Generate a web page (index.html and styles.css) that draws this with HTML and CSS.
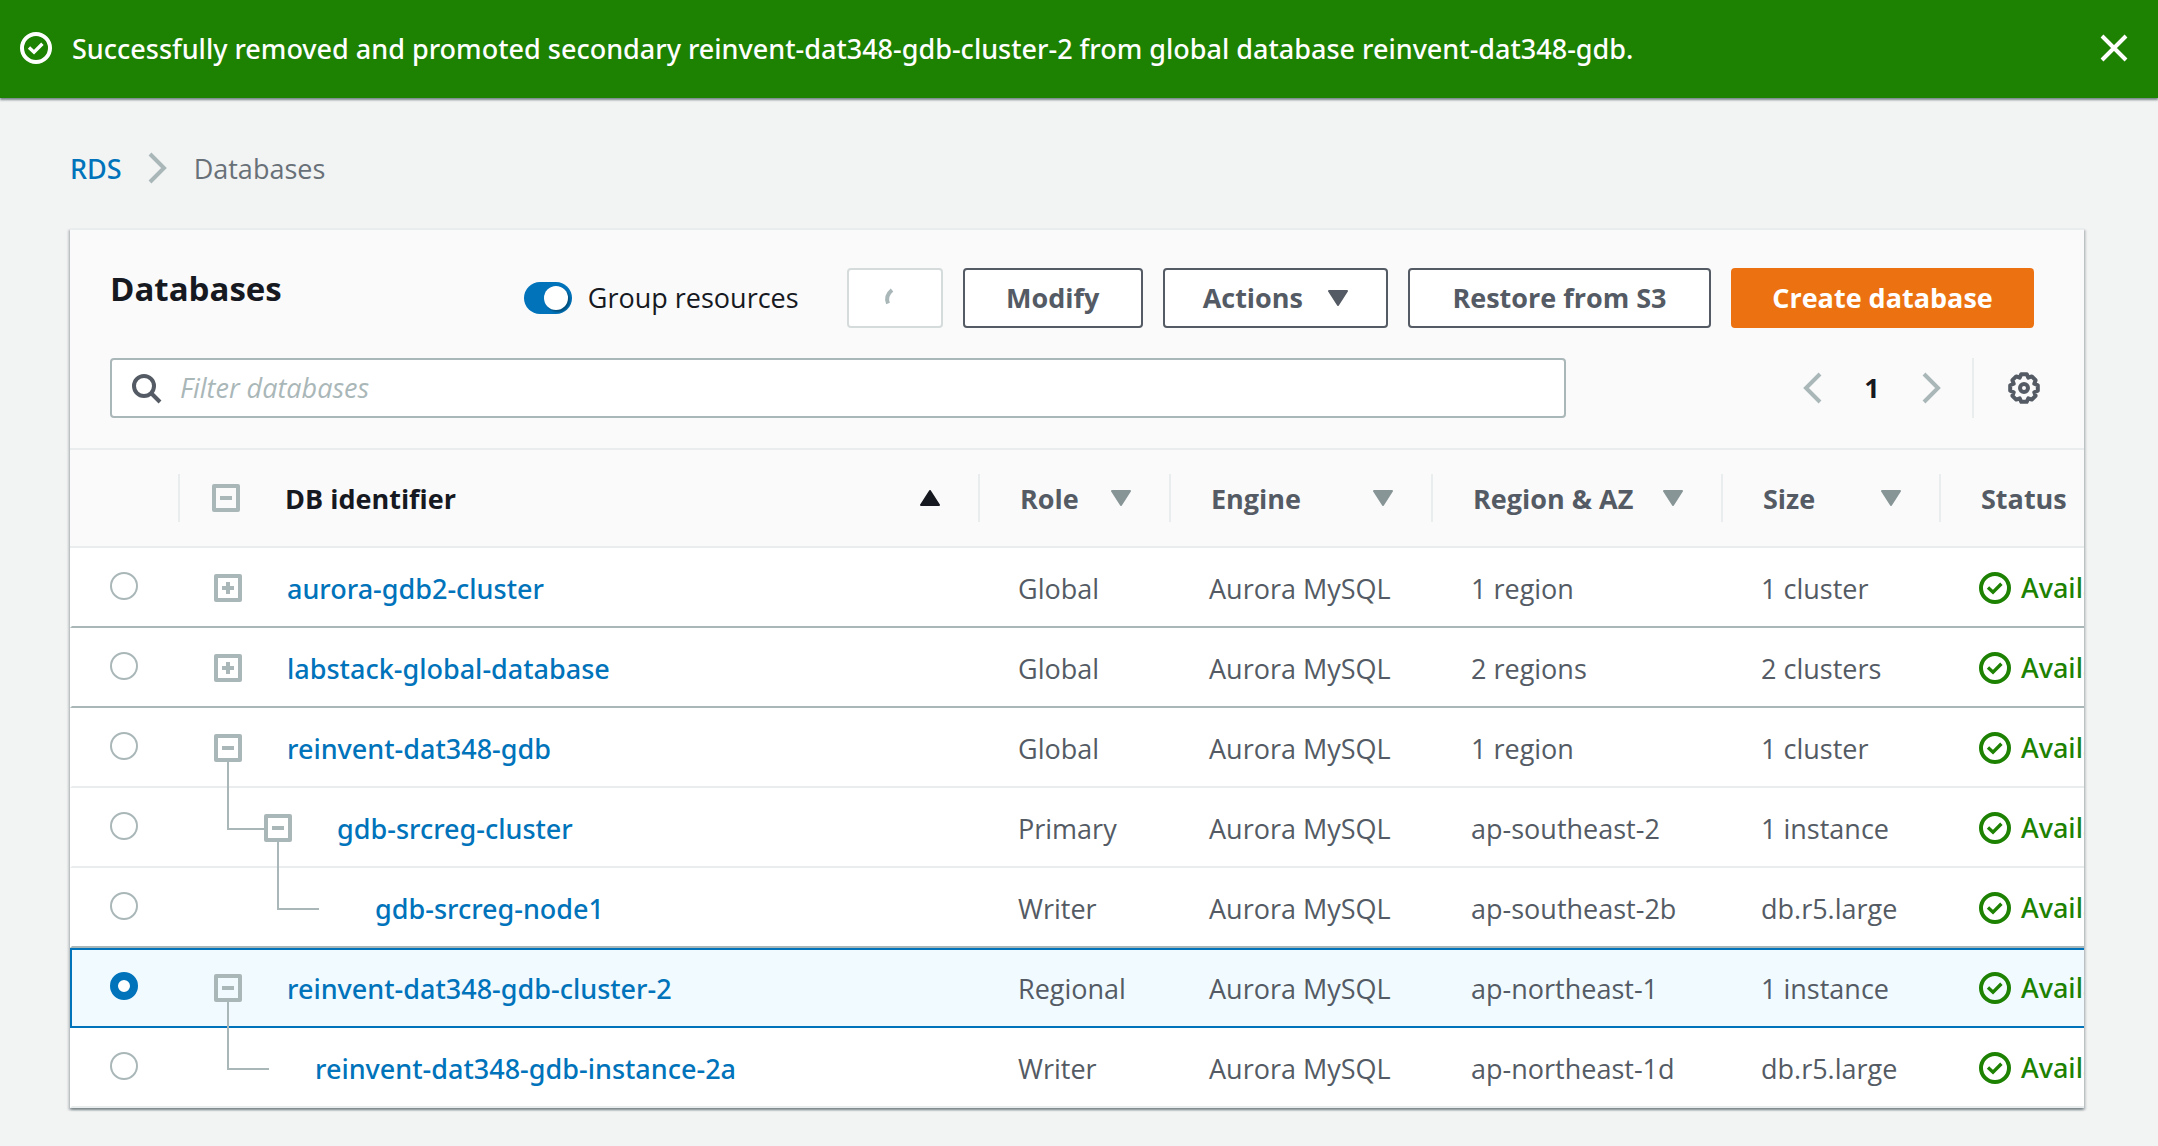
FILE: index.html
```html
<!DOCTYPE html>
<html lang="en">
<head>
<meta charset="utf-8">
<title>Databases</title>
<link rel="stylesheet" href="styles.css">
</head>
<body>
<svg class="sprite" aria-hidden="true">
  <symbol id="check" viewBox="0 0 16 16"><circle cx="8" cy="8" r="7" fill="none" stroke="currentColor" stroke-width="2"/><path d="M4.5 7.8 7 10.1 11.2 5.9" fill="none" stroke="currentColor" stroke-width="1.7"/></symbol>
  <symbol id="close" viewBox="0 0 16 16"><path d="M2 2 14 14M14 2 2 14" fill="none" stroke="currentColor" stroke-width="2"/></symbol>
  <symbol id="next" viewBox="0 0 16 16"><path d="M4 1 11 8 4 15" fill="none" stroke="currentColor" stroke-width="2"/></symbol>
  <symbol id="prev" viewBox="0 0 16 16"><path d="M12 1 5 8 12 15" fill="none" stroke="currentColor" stroke-width="2"/></symbol>
  <symbol id="search" viewBox="0 0 16 16"><circle cx="7" cy="7" r="5" fill="none" stroke="currentColor" stroke-width="2"/><path d="M10.5 10.5 15 15" fill="none" stroke="currentColor" stroke-width="2"/></symbol>
  <symbol id="gear" viewBox="0 0 32 32"><path d="M13.3 2.2H18.7L20.3 5.7 23.8 4.4 27.6 8.2 26.3 11.7 29.8 13.3V18.7L26.3 20.3 27.6 23.8 23.8 27.6 20.3 26.3 18.7 29.8H13.3L11.7 26.3 8.2 27.6 4.4 23.8 5.7 20.3 2.2 18.7V13.3L5.7 11.7 4.4 8.2 8.2 4.4 11.7 5.7Z" fill="none" stroke="currentColor" stroke-width="4" stroke-linejoin="round"/><circle cx="16" cy="16" r="4" fill="none" stroke="currentColor" stroke-width="4"/></symbol>
  <symbol id="down" viewBox="0 0 20 16"><path d="M1 1H19L10 15Z" fill="currentColor" stroke="currentColor" stroke-width="2" stroke-linejoin="round"/></symbol>
  <symbol id="up" viewBox="0 0 20 16"><path d="M1 15H19L10 1Z" fill="currentColor" stroke="currentColor" stroke-width="2" stroke-linejoin="round"/></symbol>
  <symbol id="minus" viewBox="0 0 28 28"><rect x="2" y="2" width="24" height="24" fill="none" stroke="currentColor" stroke-width="4" stroke-linejoin="round"/><path d="M8 14H20" stroke="currentColor" stroke-width="4"/></symbol>
  <symbol id="plus" viewBox="0 0 28 28"><rect x="2" y="2" width="24" height="24" fill="none" stroke="currentColor" stroke-width="4" stroke-linejoin="round"/><path d="M8 14H20M14 8V20" stroke="currentColor" stroke-width="4"/></symbol>
</svg>

<div class="banner" role="status">
  <svg class="icon"><use href="#check"/></svg>
  <p class="banner-text">Successfully removed and promoted secondary reinvent-dat348-gdb-cluster-2 from global database reinvent-dat348-gdb.</p>
  <button class="plain" type="button" aria-label="Dismiss"><svg class="icon"><use href="#close"/></svg></button>
</div>

<nav class="crumbs" aria-label="Breadcrumb">
  <a href="#rds">RDS</a>
  <svg class="icon"><use href="#next"/></svg>
  <span>Databases</span>
</nav>

<main class="panel">
  <header class="panel-head">
    <div class="title-row">
      <h1>Databases</h1>
      <div class="actions">
        <label class="switch"><input type="checkbox" role="switch" checked>Group resources</label>
        <button class="btn btn-loading" type="button" aria-label="Refresh" disabled><svg class="spinner" viewBox="0 0 32 32"><path d="M13 8Q6 14 9 21.500" fill="none" stroke="currentColor" stroke-width="4"/></svg></button>
        <button class="btn" type="button">Modify</button>
        <button class="btn" type="button">Actions<svg class="arrow"><use href="#down"/></svg></button>
        <button class="btn btn-wide" type="button">Restore from S3</button>
        <button class="btn btn-wide btn-primary" type="button">Create database</button>
      </div>
    </div>
    <div class="filter-row">
      <label class="search"><svg class="icon"><use href="#search"/></svg><input type="text" placeholder="Filter databases" aria-label="Filter databases"></label>
      <div class="pager">
        <button class="plain muted" type="button" aria-label="Previous page"><svg class="icon"><use href="#prev"/></svg></button>
        <span class="page">1</span>
        <button class="plain muted" type="button" aria-label="Next page"><svg class="icon"><use href="#next"/></svg></button>
        <span class="divider"></span>
        <button class="plain" type="button" aria-label="Preferences"><svg class="icon"><use href="#gear"/></svg></button>
      </div>
    </div>
  </header>

  <div class="table-scroll">
    <table>
      <colgroup><col class="c-pick"><col class="c-name"><col class="c-role"><col class="c-engine"><col class="c-region"><col class="c-size"><col class="c-status"></colgroup>
      <thead>
        <tr>
          <th><div class="head"></div></th>
          <th class="sorted"><div class="head head-name"><button class="plain toggle" type="button" aria-label="Collapse all"><svg><use href="#minus"/></svg></button><span>DB identifier</span><svg class="arrow"><use href="#up"/></svg></div></th>
          <th><div class="head"><span>Role</span><svg class="arrow"><use href="#down"/></svg></div></th>
          <th><div class="head"><span>Engine</span><svg class="arrow"><use href="#down"/></svg></div></th>
          <th><div class="head"><span>Region &amp; AZ</span><svg class="arrow"><use href="#down"/></svg></div></th>
          <th><div class="head"><span>Size</span><svg class="arrow"><use href="#down"/></svg></div></th>
          <th><div class="head"><span>Status</span></div></th>
        </tr>
      </thead>
      <tbody>
        <tr class="group-end">
          <td class="pick"><input type="radio" name="db" aria-label="aurora-gdb2-cluster"></td>
          <td><div class="name"><button class="plain toggle" type="button" aria-label="Expand"><svg><use href="#plus"/></svg></button><a href="#db">aurora-gdb2-cluster</a></div></td>
          <td>Global</td><td>Aurora MySQL</td><td>1 region</td><td>1 cluster</td>
          <td><div class="status"><svg class="icon"><use href="#check"/></svg>Available</div></td>
        </tr>
        <tr class="group-end">
          <td class="pick"><input type="radio" name="db" aria-label="labstack-global-database"></td>
          <td><div class="name"><button class="plain toggle" type="button" aria-label="Expand"><svg><use href="#plus"/></svg></button><a href="#db">labstack-global-database</a></div></td>
          <td>Global</td><td>Aurora MySQL</td><td>2 regions</td><td>2 clusters</td>
          <td><div class="status"><svg class="icon"><use href="#check"/></svg>Available</div></td>
        </tr>
        <tr>
          <td class="pick"><input type="radio" name="db" aria-label="reinvent-dat348-gdb"></td>
          <td><div class="name"><button class="plain toggle" type="button" aria-label="Collapse"><svg><use href="#minus"/></svg></button><a href="#db">reinvent-dat348-gdb</a></div></td>
          <td>Global</td><td>Aurora MySQL</td><td>1 region</td><td>1 cluster</td>
          <td><div class="status"><svg class="icon"><use href="#check"/></svg>Available</div></td>
        </tr>
        <tr>
          <td class="pick"><input type="radio" name="db" aria-label="gdb-srcreg-cluster"></td>
          <td class="branch"><div class="name level-1"><button class="plain toggle" type="button" aria-label="Collapse"><svg><use href="#minus"/></svg></button><a href="#db">gdb-srcreg-cluster</a></div></td>
          <td>Primary</td><td>Aurora MySQL</td><td>ap-southeast-2</td><td>1 instance</td>
          <td><div class="status"><svg class="icon"><use href="#check"/></svg>Available</div></td>
        </tr>
        <tr class="group-end">
          <td class="pick"><input type="radio" name="db" aria-label="gdb-srcreg-node1"></td>
          <td class="branch branch-deep"><div class="name leaf-2"><a href="#db">gdb-srcreg-node1</a></div></td>
          <td>Writer</td><td>Aurora MySQL</td><td>ap-southeast-2b</td><td>db.r5.large</td>
          <td><div class="status"><svg class="icon"><use href="#check"/></svg>Available</div></td>
        </tr>
        <tr class="selected">
          <td class="pick"><input type="radio" name="db" aria-label="reinvent-dat348-gdb-cluster-2" checked></td>
          <td><div class="name"><button class="plain toggle" type="button" aria-label="Collapse"><svg><use href="#minus"/></svg></button><a href="#db">reinvent-dat348-gdb-cluster-2</a></div></td>
          <td>Regional</td><td>Aurora MySQL</td><td>ap-northeast-1</td><td>1 instance</td>
          <td><div class="status"><svg class="icon"><use href="#check"/></svg>Available</div></td>
        </tr>
        <tr>
          <td class="pick"><input type="radio" name="db" aria-label="reinvent-dat348-gdb-instance-2a"></td>
          <td class="branch branch-leaf"><div class="name leaf-1"><a href="#db">reinvent-dat348-gdb-instance-2a</a></div></td>
          <td>Writer</td><td>Aurora MySQL</td><td>ap-northeast-1d</td><td>db.r5.large</td>
          <td><div class="status"><svg class="icon"><use href="#check"/></svg>Available</div></td>
        </tr>
      </tbody>
    </table>
  </div>
</main>
</body>
</html>
```
FILE: styles.css
```css
* { box-sizing: border-box; }

body {
  margin: 0;
  background: #f2f3f3;
  color: #545b64;
  font: 27px/40px "Open Sans", "Noto Sans", sans-serif;
}

a { color: #0073bb; text-decoration: none; }
a, .banner, .status { font-family: "Noto Sans", "Open Sans", sans-serif; font-weight: 500; }
button, input { font: inherit; }
svg { display: block; flex: none; }

.sprite { position: absolute; width: 0; height: 0; }
.icon { width: 32px; height: 32px; }
.arrow { width: 20px; height: 16px; }

.plain {
  padding: 0;
  border: 0;
  background: none;
  color: inherit;
  cursor: pointer;
}
.muted { color: #aab7b8; }

/* Success banner */
.banner {
  display: flex;
  align-items: center;
  gap: 20px;
  height: 98px;
  padding: 0 28px 2px 20px;
  background: #1d8102;
  color: #fff;
  box-shadow: 0 2px 2px rgba(0, 28, 36, .5);
}
.banner-text { flex: 1; margin: 0; padding-top: 2px; }

/* Breadcrumb */
.crumbs {
  display: flex;
  align-items: center;
  gap: 20px;
  padding: 50px 70px 40px;
  color: #687078;
}
.crumbs a, .crumbs span { padding-top: 2px; line-height: 38px; }
.crumbs .icon { color: #aab7b8; }

/* Panel */
.panel {
  margin: 0 74px 38px 70px;
  border-top: 2px solid #eaeded;
  background: #fff;
  box-shadow: 0 2px 2px rgba(0, 28, 36, .3), 2px 2px 2px rgba(0, 28, 36, .15), -2px 2px 2px rgba(0, 28, 36, .15);
}
.panel-head {
  padding: 38px 50px 30px 40px;
  border-bottom: 2px solid #eaeded;
  background: #fafafa;
}
.title-row { display: flex; justify-content: space-between; align-items: flex-start; }
h1 {
  margin: 0;
  color: #16191f;
  font-size: 33px;
  font-weight: 700;
  line-height: 42px;
}
.actions { display: flex; align-items: center; gap: 20px; }

.switch {
  display: flex;
  align-items: center;
  gap: 16px;
  margin-right: 28px;
  color: #16191f;
}
.switch input {
  appearance: none;
  width: 48px;
  height: 32px;
  margin: 0;
  padding: 4px 4px 4px 20px;
  border-radius: 16px;
  background: #0073bb;
}
.switch input::before {
  content: "";
  display: block;
  width: 24px;
  height: 24px;
  border-radius: 50%;
  background: #fff;
  box-shadow: 2px 2px 2px rgba(0, 28, 36, .4);
}

.btn {
  display: flex;
  align-items: center;
  justify-content: center;
  gap: 25px;
  min-width: 180px;
  height: 60px;
  padding: 0 38px;
  border: 2px solid #545b64;
  border-radius: 4px;
  background: #fff;
  color: #545b64;
  font-weight: 700;
}
.btn-wide { min-width: 303px; padding: 0; }
.btn-primary { border-color: #ec7211; background: #ec7211; color: #fff; }
.btn-loading { min-width: 96px; padding: 0; border-color: #d5dbdb; color: #aab7b8; }
.spinner { width: 32px; height: 32px; }

.filter-row { display: flex; margin: 30px -6px 0 0; }
.search {
  display: flex;
  flex: 1;
  align-items: center;
  gap: 18px;
  height: 60px;
  padding: 0 18px;
  border: 2px solid #aab7b8;
  border-radius: 4px;
  background: #fff;
}
.search input {
  flex: 1;
  min-width: 0;
  padding: 0;
  border: 0;
  outline: 0;
  background: none;
}
.search input::placeholder { color: #aab7b8; font-style: italic; opacity: 1; }
.pager {
  display: flex;
  flex: 0 0 474px;
  align-items: center;
  justify-content: flex-end;
}
.page { width: 88px; color: #16191f; font-weight: 700; text-align: center; }
.divider { width: 2px; height: 60px; margin: 0 34px 0 24px; background: #eaeded; }

/* Table */
.table-scroll { overflow-x: auto; scrollbar-width: none; }
table {
  width: 2101px;
  border-spacing: 0;
  table-layout: fixed;
}
.c-pick { width: 110px; }
.c-name { width: 800px; }
.c-role { width: 191px; }
.c-engine { width: 262px; }
.c-region { width: 290px; }
.c-size { width: 218px; }
.c-status { width: 230px; }

th {
  height: 98px;
  padding: 0;
  border-bottom: 2px solid #eaeded;
  background: #fafafa;
  font-weight: 700;
  text-align: left;
}
.head {
  display: flex;
  align-items: center;
  justify-content: space-between;
  height: 48px;
  padding: 0 38px 0 40px;
  border-right: 2px solid #eaeded;
}
.head-name { gap: 45px; padding-left: 32px; }
.head-name span { flex: 1; }
.head span { padding-top: 2px; }
.head .arrow { color: #879596; }
.sorted, .sorted .head .arrow { color: #16191f; }

td {
  height: 80px;
  padding: 2px 0 0 38px;
  border-top: 2px solid transparent;
  border-bottom: 2px solid #eaeded;
  white-space: nowrap;
}
td:nth-child(2) { padding: 0; }
td:last-child { padding-top: 0; }
.group-end td { border-bottom-color: #aab7b8; }
.selected td { border-color: #0073bb; background: #f1faff; }

.pick { padding: 0 0 4px 38px; border-left: 2px solid transparent; }
.pick input {
  appearance: none;
  display: block;
  width: 28px;
  height: 28px;
  margin: 0;
  border: 2px solid #aab7b8;
  border-radius: 50%;
  background: #fff;
}
.pick input:checked { border: 8px solid #0073bb; }

.name { display: flex; align-items: center; gap: 45px; padding-left: 34px; }
.name a { padding-top: 2px; }
.level-1 { padding-left: 84px; }
.leaf-1 { padding-left: 135px; }
.leaf-2 { padding-left: 195px; }
.toggle { color: #aab7b8; }
.toggle svg { width: 28px; height: 28px; }

/* Tree connector running from the parent's toggle down to this row */
.branch { position: relative; }
.branch::before {
  content: "";
  position: absolute;
  top: -28px;
  left: 47px;
  width: 37px;
  height: 66px;
  border: solid #aab7b8;
  border-width: 0 0 2px 2px;
}
.branch-leaf::before { width: 40px; }
.branch-deep::before { left: 97px; width: 40px; }

.status { display: flex; align-items: center; gap: 10px; color: #1d8102; }
```
